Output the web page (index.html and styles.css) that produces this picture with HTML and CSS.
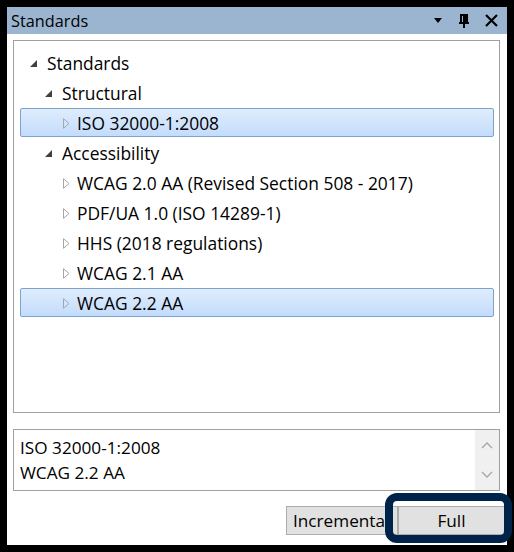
FILE: index.html
```html
<!DOCTYPE html>
<html lang="en">
<head>
  <meta charset="UTF-8">
  <title>Standards</title>
  <link rel="stylesheet" href="styles.css">
</head>
<body>

<div class="window">
  <div class="titlebar">
    <span class="title">Standards</span>
    <div class="title-icons">
      <svg class="ico-drop" width="8" height="6" viewBox="0 0 8 6"><path d="M0 0 L8 0 L4 5 Z" fill="#000"/></svg>
      <svg class="ico-pin" width="10" height="14" viewBox="0 0 10 14"><path d="M2 1 H8 V9 H2 Z M5 1 V9 M6.5 1 V9 M0 9 H10 M5 9 V14" fill="none" stroke="#000" stroke-width="2"/></svg>
      <svg class="ico-close" width="13" height="13" viewBox="0 0 13 13"><path d="M1 1 L12 12 M12 1 L1 12" stroke="#000" stroke-width="2.2"/></svg>
    </div>
  </div>

  <div class="content">
    <div class="tree">
      <div class="row lvl0"><svg class="tw" width="7" height="7" viewBox="0 0 7 7"><path d="M7 0 V7 H0 Z" fill="#404040"/></svg>Standards</div>
      <div class="row lvl1"><svg class="tw" width="7" height="7" viewBox="0 0 7 7"><path d="M7 0 V7 H0 Z" fill="#404040"/></svg>Structural</div>
      <div class="row lvl2 selected"><svg class="tw closed" width="7" height="11" viewBox="0 0 7 11"><path d="M0.5 0.7 L6 5.5 L0.5 10.3 Z" fill="none" stroke="#a6a6a6"/></svg>ISO 32000-1:2008</div>
      <div class="row lvl1"><svg class="tw" width="7" height="7" viewBox="0 0 7 7"><path d="M7 0 V7 H0 Z" fill="#404040"/></svg>Accessibility</div>
      <div class="row lvl2"><svg class="tw closed" width="7" height="11" viewBox="0 0 7 11"><path d="M0.5 0.7 L6 5.5 L0.5 10.3 Z" fill="none" stroke="#a6a6a6"/></svg>WCAG 2.0 AA (Revised Section 508 - 2017)</div>
      <div class="row lvl2"><svg class="tw closed" width="7" height="11" viewBox="0 0 7 11"><path d="M0.5 0.7 L6 5.5 L0.5 10.3 Z" fill="none" stroke="#a6a6a6"/></svg>PDF/UA 1.0 (ISO 14289-1)</div>
      <div class="row lvl2"><svg class="tw closed" width="7" height="11" viewBox="0 0 7 11"><path d="M0.5 0.7 L6 5.5 L0.5 10.3 Z" fill="none" stroke="#a6a6a6"/></svg>HHS (2018 regulations)</div>
      <div class="row lvl2"><svg class="tw closed" width="7" height="11" viewBox="0 0 7 11"><path d="M0.5 0.7 L6 5.5 L0.5 10.3 Z" fill="none" stroke="#a6a6a6"/></svg>WCAG 2.1 AA</div>
      <div class="row lvl2 selected"><svg class="tw closed" width="7" height="11" viewBox="0 0 7 11"><path d="M0.5 0.7 L6 5.5 L0.5 10.3 Z" fill="none" stroke="#a6a6a6"/></svg>WCAG 2.2 AA</div>
    </div>

    <div class="summary">
      <div class="summary-text">
        <div>ISO 32000-1:2008</div>
        <div>WCAG 2.2 AA</div>
      </div>
      <div class="scrollbar">
        <svg width="12" height="8" viewBox="0 0 12 8"><path d="M1 7 L6 2 L11 7" fill="none" stroke="#a6a6a6" stroke-width="1.3"/></svg>
        <svg width="12" height="8" viewBox="0 0 12 8"><path d="M1 1 L6 6 L11 1" fill="none" stroke="#a6a6a6" stroke-width="1.3"/></svg>
      </div>
    </div>

    <div class="buttons">
      <button class="btn btn-inc">Incremental</button>
      <button class="btn btn-full">Full</button>
      <div class="focus-ring"></div>
    </div>
  </div>
</div>

</body>
</html>
```

FILE: styles.css
```css
body {
  margin: 0;
  padding: 0;
  background: #000;
  font-family: 'Open Sans', 'Noto Sans', sans-serif;
  color: #000;
  overflow: hidden;
}

.window {
  margin: 7px;
  width: 500px;
  height: 538px;
  background: #fff;
  display: flex;
  flex-direction: column;
}

.titlebar {
  height: 27px;
  background: #9bb5d1;
  display: flex;
  align-items: center;
  justify-content: space-between;
  padding: 0 9px 0 4px;
}

.title {
  font-size: 16.3px;
}

.title-icons {
  display: flex;
  align-items: center;
}

.ico-drop {
  margin-right: 17px;
  margin-top: 1px;
}

.ico-pin {
  margin-right: 16px;
}

.content {
  flex: 1;
  padding: 6px 0 0 6px;
  position: relative;
}

.tree {
  width: 485px;
  height: 364px;
  border: 1px solid #a0a0a0;
  padding-top: 7px;
}

.row {
  box-sizing: border-box;
  height: 29px;
  margin: 0 5px 1px 6px;
  display: flex;
  align-items: center;
  font-size: 17.4px;
  border: 1px solid transparent;
  border-radius: 2px;
  white-space: nowrap;
}

.row.selected {
  background: linear-gradient(to bottom, #dfedfd, #c3dcfc);
  border-color: #7da2ce;
}

.lvl0 { padding-left: 9px; }
.lvl1 { padding-left: 24px; }
.lvl2 { padding-left: 42px; }

.tw {
  flex: none;
  margin-right: 10px;
  margin-top: 1px;
}

.tw.closed {
  margin-right: 7px;
  margin-top: 2px;
}

.summary {
  margin-top: 16px;
  width: 485px;
  height: 60px;
  border: 1px solid #a0a0a0;
  display: flex;
}

.summary-text {
  flex: 1;
  padding: 5px 0 0 6px;
  font-size: 17.2px;
  line-height: 25px;
}

.scrollbar {
  width: 24px;
  background: #f0f0f0;
  display: flex;
  flex-direction: column;
  justify-content: space-around;
  align-items: center;
}

.buttons {
  display: flex;
  justify-content: flex-end;
  margin-top: 15px;
  padding-right: 2px;
  position: relative;
}

.btn {
  height: 29px;
  background: #e1e1e1;
  border: 1px solid #adadad;
  font-family: 'Open Sans', 'Noto Sans', sans-serif;
  font-size: 17.2px;
  color: #000;
  padding: 0;
  white-space: nowrap;
  overflow: hidden;
}

.btn-inc {
  width: 112px;
  text-align: left;
  padding-left: 6px;
}

.btn-full {
  width: 107px;
}

.focus-ring {
  position: absolute;
  left: 372px;
  top: -13px;
  width: 111px;
  height: 34px;
  border: 8px solid #00234a;
  border-radius: 12px;
}
```
